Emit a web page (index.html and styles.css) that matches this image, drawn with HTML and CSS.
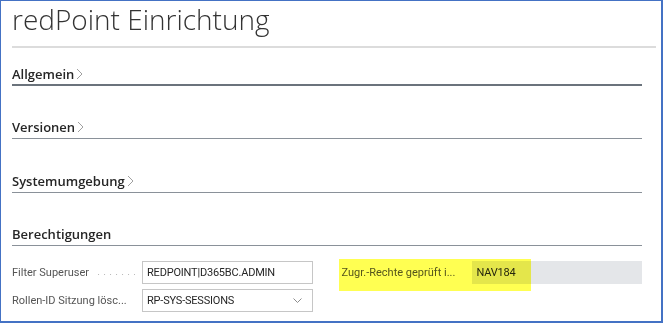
FILE: index.html
```html
<!DOCTYPE html>
<html lang="de">
<head>
  <meta charset="UTF-8">
  <title>redPoint Einrichtung</title>
  <link rel="stylesheet" href="styles.css">
</head>
<body>
  <div class="frame">
    <header class="page-head">
      <h1 class="page-title">redPoint Einrichtung</h1>
    </header>

    <section class="fasttab fasttab--focused">
      <h2 class="fasttab-head">Allgemein<svg class="chev" width="7" height="12" viewBox="0 0 7 12"><polyline points="1,1 6,6 1,11" /></svg></h2>
    </section>

    <section class="fasttab">
      <h2 class="fasttab-head">Versionen<svg class="chev" width="7" height="12" viewBox="0 0 7 12"><polyline points="1,1 6,6 1,11" /></svg></h2>
    </section>

    <section class="fasttab fasttab--env">
      <h2 class="fasttab-head">Systemumgebung<svg class="chev" width="7" height="12" viewBox="0 0 7 12"><polyline points="1,1 6,6 1,11" /></svg></h2>
    </section>

    <section class="fasttab fasttab--open">
      <h2 class="fasttab-head">Berechtigungen</h2>
      <div class="fields">
        <div class="field-col">
          <div class="field">
            <span class="field-label"><span class="label-text">Filter Superuser</span><span class="leader"></span></span>
            <span class="field-input">REDPOINT|D365BC.ADMIN</span>
          </div>
          <div class="field">
            <span class="field-label"><span class="label-text">Rollen-ID Sitzung lösc...</span><span class="leader leader--short"></span></span>
            <span class="field-input field-input--select">RP-SYS-SESSIONS<svg class="drop" width="9" height="5" viewBox="0 0 9 5"><polyline points="0.5,0.5 4.5,4.5 8.5,0.5" /></svg></span>
          </div>
        </div>
        <div class="field-col">
          <div class="field">
            <span class="field-label"><span class="label-text">Zugr.-Rechte geprüft i...</span><span class="leader leader--short"></span></span>
            <span class="field-input field-input--readonly">NAV184</span>
            <span class="marker"></span>
          </div>
        </div>
      </div>
    </section>
  </div>
</body>
</html>
```

FILE: styles.css
```css
:root {
  --font-ui: 'Open Sans', 'Noto Sans', sans-serif;
  --font-field: Roboto, 'Open Sans', sans-serif;
  --color-frame: #4472c4;
  --color-text: #333;
  --color-label: #555;
  --color-rule-light: #dcdcdc;
  --color-rule: #8a9199;
  --color-rule-focus: #6b737c;
}

html, body {
  margin: 0;
  padding: 0;
  background: #fff;
}

body {
  font-family: var(--font-ui);
  color: var(--color-text);
}

.frame {
  width: 663px;
  height: 323px;
  box-sizing: border-box;
  border: solid var(--color-frame);
  border-width: 1px 2px 2px 1px;
  padding: 0 19px 0 11px;
}

.page-head {
  height: 45px;
  margin-right: -14px;
  border-bottom: 2px solid var(--color-rule-light);
}

.page-title {
  margin: 0;
  font-size: 28px;
  font-weight: 300;
  line-height: 36.2px;
  color: #333;
}

.fasttab {
  margin-top: 31px;
}

.fasttab--focused {
  margin-top: 16px;
}

.fasttab--env {
  margin-top: 32px;
}

.fasttab-head {
  display: flex;
  align-items: center;
  margin: 0;
  padding-bottom: 1px;
  font-size: 13px;
  font-weight: 600;
  line-height: 20px;
  color: #262626;
  border-bottom: 1px solid var(--color-rule);
}

.fasttab--focused .fasttab-head {
  border-bottom: 2px solid var(--color-rule-focus);
  padding-bottom: 0;
}

.chev {
  margin-left: 2px;
  fill: none;
  stroke: #a0a0a0;
  stroke-width: 1;
}

.fields {
  display: grid;
  grid-template-columns: 1fr 1fr;
  column-gap: 29px;
  margin-top: 15px;
}

.field-col {
  display: flex;
  flex-direction: column;
  gap: 5px;
}

.field {
  position: relative;
  display: flex;
  height: 23px;
  font-family: var(--font-field);
  font-size: 11px;
}

.field-label {
  display: flex;
  width: 130px;
  flex: none;
  align-items: center;
  color: var(--color-label);
}

.label-text {
  white-space: nowrap;
}

.leader {
  flex: 1;
  align-self: stretch;
  margin: 0 7px 0 6px;
  background-image: linear-gradient(to right, transparent 5px, #b8b8b8 5px);
  background-size: 6px 1px;
  background-repeat: repeat-x;
  background-position: right 0 top 13px;
}

.leader--short {
  flex: none;
  width: 1px;
  margin-left: auto;
  background-size: 1px 1px;
}

.field-input {
  display: flex;
  flex: 1;
  align-items: center;
  box-sizing: border-box;
  padding: 0 4px;
  border: 1px solid #c6c6c6;
  color: #262626;
  letter-spacing: -0.2px;
  white-space: nowrap;
}

.field-input--select {
  justify-content: space-between;
  padding-right: 10px;
}

.drop {
  fill: none;
  stroke: #8c8c8c;
  stroke-width: 1;
}

.field-input--readonly {
  border-color: #e4e6e9;
  background: #e4e6e9;
}

.marker {
  position: absolute;
  left: -3px;
  top: -2px;
  width: 192px;
  height: 32px;
  background: #ffff52;
  mix-blend-mode: multiply;
  pointer-events: none;
}
```
